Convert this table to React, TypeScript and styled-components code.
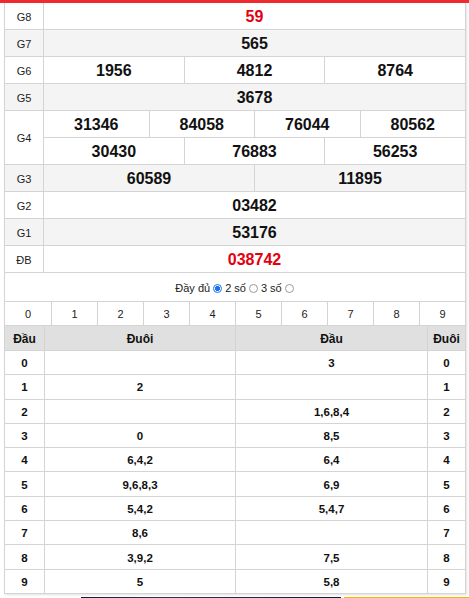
import React from "react";
import styled, { createGlobalStyle } from "styled-components";

const Global = createGlobalStyle`
  html, body { margin: 0; padding: 0; background: #fff; }
  body { font-family: "Liberation Sans", Arial, Helvetica, sans-serif; color: #111; }
`;

const BORDER = "#d4d4d4";

const Page = styled.div`
  width: 469px;
  display: flex;
  flex-direction: column;
`;

const RedBar = styled.div`
  height: 3px;
  background: #ef2b30;
`;

const Wrapper = styled.div`
  margin: 0 3px 0 4px;
  border-left: 1px solid ${BORDER};
  border-right: 1px solid ${BORDER};
  border-bottom: 1px solid ${BORDER};
  box-shadow: 1px 1px 2px rgba(0, 0, 0, 0.12);
  background: #fff;
`;

const PrizeRow = styled.div<{ $alt?: boolean }>`
  display: grid;
  grid-template-columns: 39px 1fr;
  background: ${(p) => (p.$alt ? "#f4f4f4" : "#fff")};
  border-bottom: 1px solid ${BORDER};
`;

const Label = styled.div`
  display: flex;
  align-items: center;
  justify-content: center;
  padding-top: 1px;
  font-size: 11px;
  color: #222;
  border-right: 1px solid ${BORDER};
`;

const Lines = styled.div`
  display: flex;
  flex-direction: column;
`;

const Line = styled.div`
  display: flex;
  height: 26px;
  & + & {
    border-top: 1px solid ${BORDER};
  }
`;

const Num = styled.div<{ $red?: boolean }>`
  flex: 1;
  display: flex;
  align-items: center;
  justify-content: center;
  padding-top: 1px;
  font-size: 16px;
  font-weight: bold;
  color: ${(p) => (p.$red ? "#e3000f" : "#111")};
  & + & {
    border-left: 1px solid ${BORDER};
  }
`;

const RadioRow = styled.div`
  height: 29px;
  display: flex;
  align-items: center;
  justify-content: center;
  padding-top: 1px;
  box-sizing: border-box;
  font-size: 11px;
  color: #222;
  border-bottom: 1px solid ${BORDER};
  gap: 2px;
`;

const Radio = styled.span<{ $on?: boolean }>`
  display: inline-block;
  box-sizing: border-box;
  width: 9px;
  height: 9px;
  border-radius: 50%;
  margin: 1px 1px 0 1px;
  border: 1px solid ${(p) => (p.$on ? "#1a73e8" : "#9a9a9a")};
  background: ${(p) =>
    p.$on ? "radial-gradient(circle, #1a73e8 0 2.4px, #fff 2.6px)" : "#fff"};
`;

const DigitRow = styled.div`
  display: grid;
  grid-template-columns: repeat(10, 1fr);
  height: 23px;
  border-bottom: 1px solid ${BORDER};
`;

const Digit = styled.div`
  display: flex;
  align-items: center;
  justify-content: center;
  font-size: 11px;
  color: #222;
  & + & {
    border-left: 1px solid ${BORDER};
  }
`;

const LotoRow = styled.div<{ $head?: boolean }>`
  display: grid;
  grid-template-columns: 39px 191px 192px 1fr;
  height: ${(p) => (p.$head ? "24px" : "23.3px")};
  background: ${(p) => (p.$head ? "#e0e0e0" : "#fff")};
  & + & {
    border-top: 1px solid ${BORDER};
  }
`;

const LotoCell = styled.div<{ $head?: boolean }>`
  display: flex;
  align-items: center;
  justify-content: center;
  padding-top: 1px;
  font-size: ${(p) => (p.$head ? "12px" : "11.5px")};
  font-weight: bold;
  color: #111;
  & + & {
    border-left: 1px solid ${BORDER};
  }
`;

const Banner = styled.div`
  margin-top: 3px;
  height: 4px;
  display: flex;
`;

const BannerGap = styled.div<{ $w: number }>`
  width: ${(p) => p.$w}px;
`;

const BannerDark = styled.div`
  width: 260px;
  background: linear-gradient(90deg, #1a1830, #3a2f55 30%, #151a3a);
`;

const BannerYellow = styled.div`
  flex: 1;
  background: #f5b800;
`;

type Prize = { label: string; lines: string[][]; red?: boolean };

const prizes: Prize[] = [
  { label: "G8", lines: [["59"]], red: true },
  { label: "G7", lines: [["565"]] },
  { label: "G6", lines: [["1956", "4812", "8764"]] },
  { label: "G5", lines: [["3678"]] },
  {
    label: "G4",
    lines: [
      ["31346", "84058", "76044", "80562"],
      ["30430", "76883", "56253"],
    ],
  },
  { label: "G3", lines: [["60589", "11895"]] },
  { label: "G2", lines: [["03482"]] },
  { label: "G1", lines: [["53176"]] },
  { label: "ĐB", lines: [["038742"]], red: true },
];

const loto: [string, string][] = [
  ["", "3"],
  ["2", ""],
  ["", "1,6,8,4"],
  ["0", "8,5"],
  ["6,4,2", "6,4"],
  ["9,6,8,3", "6,9"],
  ["5,4,2", "5,4,7"],
  ["8,6", ""],
  ["3,9,2", "7,5"],
  ["5", "5,8"],
];

export default function App() {
  return (
    <Page>
      <Global />
      <RedBar />
      <Wrapper>
        {prizes.map((p, i) => (
          <PrizeRow key={p.label} $alt={i % 2 === 1}>
            <Label>{p.label}</Label>
            <Lines>
              {p.lines.map((line, li) => (
                <Line key={li}>
                  {line.map((n) => (
                    <Num key={n} $red={p.red}>
                      {n}
                    </Num>
                  ))}
                </Line>
              ))}
            </Lines>
          </PrizeRow>
        ))}
        <RadioRow>
          Đầy đủ <Radio $on /> 2 số <Radio /> 3 số <Radio />
        </RadioRow>
        <DigitRow>
          {Array.from({ length: 10 }, (_, i) => (
            <Digit key={i}>{i}</Digit>
          ))}
        </DigitRow>
        <LotoRow $head>
          <LotoCell $head>Đầu</LotoCell>
          <LotoCell $head>Đuôi</LotoCell>
          <LotoCell $head>Đầu</LotoCell>
          <LotoCell $head>Đuôi</LotoCell>
        </LotoRow>
        {loto.map(([a, b], i) => (
          <LotoRow key={i}>
            <LotoCell>{i}</LotoCell>
            <LotoCell>{a}</LotoCell>
            <LotoCell>{b}</LotoCell>
            <LotoCell>{i}</LotoCell>
          </LotoRow>
        ))}
      </Wrapper>
      <Banner>
        <BannerGap $w={81} />
        <BannerDark />
        <BannerGap $w={3} />
        <BannerYellow />
      </Banner>
    </Page>
  );
}
